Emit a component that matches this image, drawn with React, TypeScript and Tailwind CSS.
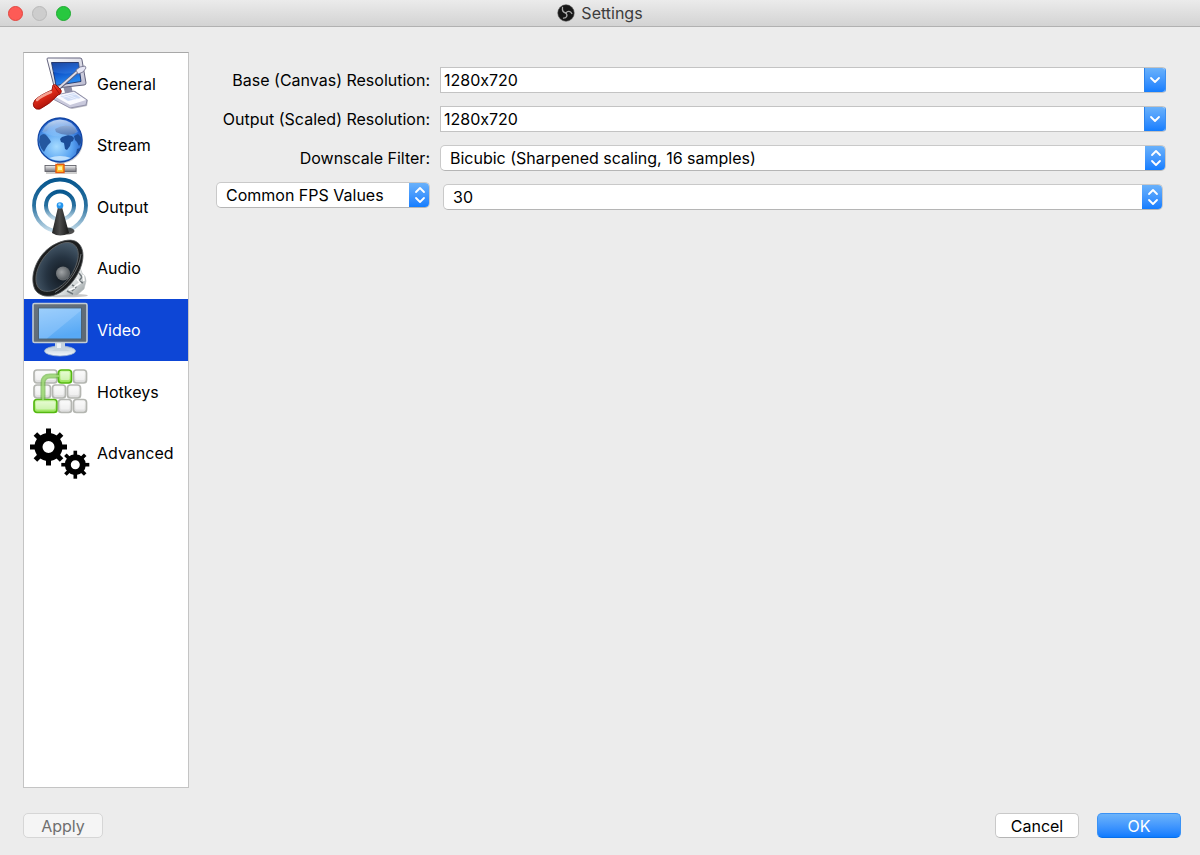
import { useState } from "react";
import type { ReactNode } from "react";

const TEETH = [0, 45, 90, 135, 180, 225, 270, 315];

function Icon({ children }: { children: ReactNode }) {
  return (
    <svg viewBox="0 0 62 61" className="h-[61px] w-[62px] shrink-0" aria-hidden="true">
      {children}
    </svg>
  );
}

function GeneralIcon() {
  return (
    <Icon>
      <defs>
        <linearGradient id="g-frame" x1="0" y1="0" x2="1" y2="1">
          <stop offset="0" stopColor="#ffffff" />
          <stop offset="1" stopColor="#b9b9cf" />
        </linearGradient>
        <linearGradient id="g-screen" x1="0" y1="0" x2="0.3" y2="1">
          <stop offset="0" stopColor="#062a86" />
          <stop offset="0.45" stopColor="#0b50c8" />
          <stop offset="1" stopColor="#2a8cf0" />
        </linearGradient>
        <linearGradient id="g-handle" x1="0.2" y1="0.1" x2="0.7" y2="0.9">
          <stop offset="0" stopColor="#f9a08c" />
          <stop offset="0.35" stopColor="#e8301c" />
          <stop offset="1" stopColor="#9c0a04" />
        </linearGradient>
      </defs>
      <path d="M34 33l8-1 2 8-7 3z" fill="#8f8fa6" />
      <path d="M24 46l3-3 19-5 13 9-1 6-15 3z" fill="#77778a" opacity="0.5" />
      <path d="M23 43l22-5 13 9-1 5-16 3-17-9z" fill="#c9c9dc" stroke="#8585a0" strokeWidth="0.8" />
      <path d="M25 43l20-4 12 8-16 5z" fill="#fbfbff" />
      <path d="M31 43l14-3 7 5-13 3z" fill="#cfdcf6" />
      <path d="M33 42l14 5M37 41l12 5M31 45l16-4" stroke="#f3f6ff" strokeWidth="0.7" />
      <path d="M18 6q0-1 1-1l32 0q2 0 2 2l4 23q0 2-2 2l-28 3q-2 0-2-2z" fill="url(#g-frame)" stroke="#64647e" strokeWidth="1" />
      <path d="M22.500 9.500h27l2.500 19-25 4z" fill="url(#g-screen)" stroke="#132558" strokeWidth="0.8" />
      <path d="M24 19q14 4 27-1l-1-8H23z" fill="#7ab8ff" opacity="0.2" />
      <path d="M28 37L49 18" stroke="#5f5f78" strokeWidth="3.4" />
      <path d="M28 36.500L50 17" stroke="#dcdce8" strokeWidth="1.8" />
      <path d="M47 17l4-3 5-1 1 2-3 4-5 2z" fill="#e6e6f4" stroke="#6c6c88" strokeWidth="0.8" />
      <path d="M24 32q3-1 4 1l4 4q1 2-1 4l-2 1Q21 51 11 56q-4 1-6-2-2-3 1-7 5-5 17-10z" fill="url(#g-handle)" stroke="#8d0b06" strokeWidth="0.9" />
      <path d="M8 47q4-4 14-8" stroke="#ffc9bb" strokeWidth="2.500" strokeLinecap="round" fill="none" opacity="0.75" />
      <path d="M25 33l5 7" stroke="#a50f08" strokeWidth="1" />
    </Icon>
  );
}

function StreamIcon() {
  return (
    <Icon>
      <defs>
        <radialGradient id="s-globe" cx="0.42" cy="0.65" r="0.65">
          <stop offset="0" stopColor="#a6dbff" />
          <stop offset="0.55" stopColor="#5aa4f2" />
          <stop offset="1" stopColor="#1b57c4" />
        </radialGradient>
        <linearGradient id="s-shine" x1="0" y1="0" x2="0" y2="1">
          <stop offset="0" stopColor="#f3f9ff" stopOpacity="0.95" />
          <stop offset="1" stopColor="#c4e0ff" stopOpacity="0.15" />
        </linearGradient>
        <linearGradient id="s-bar" x1="0" y1="0" x2="0" y2="1">
          <stop offset="0" stopColor="#f4f4f4" />
          <stop offset="1" stopColor="#76767e" />
        </linearGradient>
      </defs>
      <circle cx="32" cy="26.500" r="22" fill="#8d929e" opacity="0.45" />
      <rect x="28" y="44" width="7" height="9" fill="url(#s-bar)" />
      <rect x="17" y="53" width="31" height="6" fill="#888" opacity="0.4" />
      <rect x="16" y="50.500" width="31" height="6" fill="url(#s-bar)" stroke="#64646c" strokeWidth="0.9" />
      <rect x="27" y="49.500" width="8" height="8" fill="#ffc52d" stroke="#e85a0c" strokeWidth="1.400" />
      <path d="M29 51.500h4v3.500h-4z" fill="#fff2a6" />
      <circle cx="31" cy="25" r="22" fill="url(#s-globe)" stroke="#1346a4" strokeWidth="1.300" />
      <path d="M11 21q4-4 7 0l3 4 1 2-3 3-2 3-2 4-3-4-2-6z" fill="#24579f" />
      <path d="M16 12q4-5 8-6l3 2-3 3-4 1-2 4-4 1z" fill="#4a82c9" opacity="0.8" />
      <path d="M33 22l3-1 3-1 4 1 2 2-1 3-2 1-1 4-3 4-2-1-1-6-3-1-1-3z" fill="#1c4d98" />
      <path d="M45 21l4-2 3 3 0 6-2 3-2-4-2-2z" fill="#1c4d98" />
      <path d="M26 14q9-6 18-2l4 4-3 3-6 1-7-1-5-2z" fill="#3c5f9d" opacity="0.85" />
      <path d="M48 34l3-1-2 5-2 1z" fill="#1c4d98" />
      <path d="M20 43q11-4 22 0-11 5-22 0z" fill="#d5ecff" opacity="0.8" />
      <path d="M13 17Q18 5 31 4.500 44 5 49 17q-18 9-36 0z" fill="url(#s-shine)" opacity="0.8" />
    </Icon>
  );
}

function OutputIcon() {
  return (
    <Icon>
      <defs>
        <linearGradient id="o-ring" x1="0" y1="0" x2="0" y2="1">
          <stop offset="0" stopColor="#07578f" />
          <stop offset="0.5" stopColor="#28709f" />
          <stop offset="1" stopColor="#c9dfec" />
        </linearGradient>
        <linearGradient id="o-cone" x1="0" y1="0" x2="1" y2="0">
          <stop offset="0" stopColor="#222" />
          <stop offset="0.45" stopColor="#4b4b4b" />
          <stop offset="1" stopColor="#161616" />
        </linearGradient>
      </defs>
      <circle cx="31" cy="29.500" r="26" fill="none" stroke="url(#o-ring)" strokeWidth="3.800" />
      <circle cx="31" cy="29.500" r="14" fill="none" stroke="url(#o-ring)" strokeWidth="4" />
      <ellipse cx="38" cy="55" rx="7.500" ry="3.500" fill="#222" opacity="0.8" />
      <path d="M29 31h4L40 57q-9 5-17 0z" fill="url(#o-cone)" />
      <circle cx="31" cy="29.500" r="3.300" fill="#2495ee" />
      <circle cx="30.500" cy="28.500" r="1.300" fill="#9bd7ff" />
    </Icon>
  );
}

function AudioIcon() {
  return (
    <Icon>
      <defs>
        <linearGradient id="a-chrome" x1="0" y1="0" x2="1" y2="1">
          <stop offset="0" stopColor="#777b7e" />
          <stop offset="0.5" stopColor="#eef1f1" />
          <stop offset="1" stopColor="#8c9497" />
        </linearGradient>
        <radialGradient id="a-cone" cx="0.62" cy="0.68" r="0.75">
          <stop offset="0" stopColor="#10161d" />
          <stop offset="0.5" stopColor="#263442" />
          <stop offset="1" stopColor="#4d6172" />
        </radialGradient>
        <radialGradient id="a-cap" cx="0.4" cy="0.4">
          <stop offset="0" stopColor="#a0a3a6" />
          <stop offset="1" stopColor="#62676b" />
        </radialGradient>
      </defs>
      <ellipse cx="36" cy="57.500" rx="23" ry="1.800" fill="#444" opacity="0.3" />
      <path d="M50 27l3 8q4 3 4 8l-2 8-7 6-24 1z" fill="url(#a-chrome)" stroke="#b3b8ba" strokeWidth="0.6" />
      <path d="M50 35l3 4-3 4 4 2M43 47l4 2-4 4M38 53l6 3" fill="none" stroke="#596266" strokeWidth="1.500" opacity="0.8" />
      <path d="M48 41l3 4-6 4M54 37l1 6M40 52l6-2" fill="none" stroke="#fff" strokeWidth="1.800" opacity="0.9" />
      <path d="M44 2.500c6 1 10 7 10 15 0 15-13 34-27 39-7 3-17 2-21-5C0 39 7 20 20 10 28 4 38 1 44 2.500z" fill="#1b1d1e" stroke="#55585a" strokeWidth="0.800" />
      <path d="M42 5c6 2 8 8 7 15-2 13-12 27-24 32-8 3-15 1-17-5C4 36 12 20 23 11 31 5 37 3.500 42 5z" fill="url(#a-cone)" stroke="#5a5f63" strokeWidth="1" />
      <circle cx="34" cy="35.500" r="7" fill="url(#a-cap)" />
      <path d="M52 16C50 32 39 47 26 54.500" fill="none" stroke="#73777a" strokeWidth="0.900" />
    </Icon>
  );
}

function VideoIcon() {
  return (
    <Icon>
      <defs>
        <linearGradient id="v-frame" x1="0" y1="0" x2="1" y2="1">
          <stop offset="0" stopColor="#66727e" />
          <stop offset="1" stopColor="#5c6873" />
        </linearGradient>
        <linearGradient id="v-screen" x1="0" y1="0" x2="0.300" y2="1">
          <stop offset="0" stopColor="#91c9fb" />
          <stop offset="1" stopColor="#58a9f5" />
        </linearGradient>
        <linearGradient id="v-base" x1="0" y1="0" x2="0" y2="1">
          <stop offset="0" stopColor="#b8c8d6" />
          <stop offset="1" stopColor="#f3f8fb" />
        </linearGradient>
      </defs>
      <ellipse cx="31" cy="51" rx="15.500" ry="5" fill="url(#v-base)" stroke="#9cb4d0" strokeWidth="0.800" />
      <path d="M26 42h10v6q3 3 5 3H21q4 0 5-3z" fill="#c6d3de" />
      <path d="M28 43h4v5h-4z" fill="#eef4f7" />
      <rect x="4" y="3.500" width="54" height="39" rx="1.500" fill="url(#v-frame)" stroke="#c4cdd3" strokeWidth="1.600" />
      <rect x="9" y="7.500" width="44" height="32" fill="#4a6276" />
      <rect x="10" y="8.500" width="42" height="30" fill="url(#v-screen)" />
      <path d="M10 8.500h42v2L18 38.500h-8z" fill="#b5dcff" opacity="0.300" />
    </Icon>
  );
}

const KEYS = [
  { x: 5, y: 9, w: 23, on: false },
  { x: 29.5, y: 9, w: 13, on: true },
  { x: 44.5, y: 9, w: 13, on: false },
  { x: 5, y: 24, w: 16.5, on: false },
  { x: 23.5, y: 24, w: 13, on: false },
  { x: 38.5, y: 24, w: 13, on: false },
  { x: 5, y: 38.5, w: 23, on: true },
  { x: 29.5, y: 38.5, w: 13, on: false },
  { x: 44.5, y: 38.5, w: 13, on: false },
];

function HotkeysIcon() {
  return (
    <Icon>
      <defs>
        <linearGradient id="h-key" x1="0" y1="0" x2="0" y2="1">
          <stop offset="0" stopColor="#fafafa" />
          <stop offset="1" stopColor="#dcdcdc" />
        </linearGradient>
        <linearGradient id="h-on" x1="0" y1="0" x2="0" y2="1">
          <stop offset="0" stopColor="#d9fbb8" />
          <stop offset="1" stopColor="#96e457" />
        </linearGradient>
      </defs>
      {KEYS.map((k) => (
        <g key={`${k.x}-${k.y}`}>
          <rect x={k.x} y={k.y} width={k.w} height="13" rx="3" fill={k.on ? "url(#h-on)" : "url(#h-key)"} stroke={k.on ? "#55b812" : "#b4b6b1"} strokeWidth="1.700" />
          <rect x={k.x + 2} y={k.y + 2} width={k.w - 4} height="8" rx="1.500" fill="#fff" opacity="0.450" />
        </g>
      ))}
      <path d="M14 39V22q0-7 7-7h9" fill="none" stroke="#67b53b" strokeWidth="5" opacity="0.650" />
      <path d="M14 39V22q0-7 7-7h9" fill="none" stroke="#a9df82" strokeWidth="2" opacity="0.700" />
    </Icon>
  );
}

function Gear({ cx, cy, body, outer, ring, tooth }: { cx: number; cy: number; body: number; outer: number; ring: number; tooth: number }) {
  return (
    <g transform={`translate(${cx} ${cy})`}>
      <circle r={body - ring / 2} fill="none" stroke="#000" strokeWidth={ring} />
      {TEETH.map((a) => (
        <rect key={a} x={-tooth / 2} y={-outer} width={tooth} height={outer - body + 1.5} transform={`rotate(${a})`} />
      ))}
    </g>
  );
}

function AdvancedIcon() {
  return (
    <Icon>
      <Gear cx={19.5} cy={24} body={14} outer={18.5} ring={8} tooth={5} />
      <Gear cx={46.3} cy={41.7} body={10.5} outer={14} ring={6} tooth={3.6} />
    </Icon>
  );
}

const SECTIONS = [
  { name: "General", Glyph: GeneralIcon },
  { name: "Stream", Glyph: StreamIcon },
  { name: "Output", Glyph: OutputIcon },
  { name: "Audio", Glyph: AudioIcon },
  { name: "Video", Glyph: VideoIcon },
  { name: "Hotkeys", Glyph: HotkeysIcon },
  { name: "Advanced", Glyph: AdvancedIcon },
];

function ObsLogo() {
  return (
    <svg viewBox="0 0 18 18" className="size-[18px]" aria-hidden="true">
      <circle cx="9" cy="9" r="8.200" fill="#171717" stroke="#444" strokeWidth="0.600" />
      <g fill="none" stroke="#a9a9a9" strokeWidth="1.300" strokeLinecap="round">
        <path d="M5.500 3.500C5 6.500 6.500 8.500 9 9" />
        <path d="M14.800 9.500C13.500 6.800 10.500 6.500 9 9" />
        <path d="M6.500 14.200C9.800 14 10.800 11.500 9 9" />
      </g>
    </svg>
  );
}

function ComboBox({ id }: { id: string }) {
  return (
    <div className="flex h-[26px] overflow-hidden rounded-r-[4px] border border-[#c3c3c3] border-r-[#3c8ff0] bg-white">
      <input id={id} defaultValue="1280x720" className="min-w-0 flex-1 bg-transparent px-[3px] text-black outline-none [font-feature-settings:'calt'_0]" />
      <button type="button" aria-label="Show options" className="-my-px flex w-[21px] items-center justify-center border-l border-[#2b83ec] bg-linear-to-b from-[#6cb3fa] to-[#0b7bff]">
        <svg viewBox="0 0 12 8" className="h-2 w-3" aria-hidden="true">
          <path d="M2 2l4 4 4-4" fill="none" stroke="#fff" strokeWidth="1.800" strokeLinecap="round" strokeLinejoin="round" />
        </svg>
      </button>
    </div>
  );
}

function PopUp({ id, label, options }: { id: string; label?: string; options: string[] }) {
  return (
    <div className="relative flex h-[26px] overflow-hidden rounded-[5px] border border-[#c9c9c9] border-b-[#b5b5b5] bg-white">
      <select id={id} aria-label={label} className="min-w-0 flex-1 appearance-none bg-transparent pr-6 pl-[9px] text-black outline-none">
        {options.map((o) => (
          <option key={o}>{o}</option>
        ))}
      </select>
      <span className="pointer-events-none absolute -inset-y-px -right-px flex w-[21px] items-center justify-center bg-linear-to-b from-[#6cb3fa] to-[#0b7bff]">
        <svg viewBox="0 0 12 18" className="h-[18px] w-3" aria-hidden="true">
          <path d="M2 6l4-4 4 4M2 12l4 4 4-4" fill="none" stroke="#fff" strokeWidth="1.800" strokeLinecap="round" strokeLinejoin="round" />
        </svg>
      </span>
    </div>
  );
}

export default function App() {
  const [active, setActive] = useState("Video");
  return (
    <div className="flex min-h-screen flex-col bg-[#ececec] font-[Inter,sans-serif] text-[16px] leading-5 text-black">
      <header className="grid h-[27px] grid-cols-[1fr_auto_1fr] items-center border-b border-[#b1b1b1] bg-linear-to-b from-[#ebebeb] to-[#d3d3d3]">
        <div className="flex gap-[9px] pl-2">
          <button type="button" aria-label="Close" className="size-[15px] rounded-full border border-[#e2463f] bg-[#fd5b56]" />
          <button type="button" aria-label="Minimize" disabled className="size-[15px] rounded-full border border-[#b9b9b9] bg-[#cdcdcd]" />
          <button type="button" aria-label="Zoom" className="size-[15px] rounded-full border border-[#1fab32] bg-[#28c83f]" />
        </div>
        <h1 className="flex items-center gap-[6px] text-[#3c3c3c]">
          <ObsLogo />
          Settings
        </h1>
      </header>

      <main className="flex flex-1 flex-col gap-[25px] pt-[25px] pr-[19px] pb-[17px] pl-[23px]">
        <div className="flex flex-1 gap-[27px]">
          <nav aria-label="Settings sections" className="w-[166px] shrink-0 border border-[#c4c4c4] border-t-[#a8a8a8] bg-white">
            <ul className="grid h-[431px] grid-rows-7">
              {SECTIONS.map(({ name, Glyph }) => (
                <li key={name} className="min-h-0">
                  <button
                    type="button"
                    aria-current={active === name ? "page" : undefined}
                    onClick={() => setActive(name)}
                    className={
                      active === name
                        ? "flex h-full w-full items-center gap-[6px] bg-[#0d46d6] pl-[5px] text-left text-white"
                        : "flex h-full w-full items-center gap-[6px] pl-[5px] text-left text-black"
                    }
                  >
                    <Glyph />
                    {name}
                  </button>
                </li>
              ))}
            </ul>
          </nav>

          <form className="flex min-w-0 flex-1 flex-col gap-[11px] pt-[15px] pr-[15px]">
            <div className="grid grid-cols-[214px_1fr] items-center gap-x-[10px] gap-y-[13px]">
              <label htmlFor="base" className="text-right">Base (Canvas) Resolution:</label>
              <ComboBox id="base" />
              <label htmlFor="scaled" className="text-right">Output (Scaled) Resolution:</label>
              <ComboBox id="scaled" />
              <label htmlFor="filter" className="text-right">Downscale Filter:</label>
              <PopUp id="filter" options={["Bicubic (Sharpened scaling, 16 samples)", "Bilinear (Fastest, but blurry if scaling)", "Lanczos (Sharpened scaling, 32 samples)"]} />
            </div>
            <div className="grid grid-cols-[214px_1fr] items-start gap-x-[10px]">
              <PopUp id="fps-type" label="FPS type" options={["Common FPS Values", "Integer FPS Value", "Fractional FPS Value"]} />
              <div className="px-[3px] pt-[2px]">
                <PopUp id="fps" label="Frames per second" options={["30", "60", "48", "24", "20", "10"]} />
              </div>
            </div>
          </form>
        </div>

        <footer className="flex gap-[18px]">
          <button type="button" disabled className="mr-auto h-[25px] w-20 rounded-[5px] border border-[#d6d6d6] bg-[#f5f5f5] text-[#6f6f6f]">Apply</button>
          <button type="button" className="h-[25px] w-[84px] rounded-[5px] border border-[#c9c9c9] border-b-[#b5b5b5] bg-white">Cancel</button>
          <button type="button" className="h-[25px] w-[84px] rounded-[5px] border border-[#3a92f5] border-b-[#0a6fe8] bg-linear-to-b from-[#6cb3fa] to-[#0b7bff] text-white">OK</button>
        </footer>
      </main>
    </div>
  );
}
